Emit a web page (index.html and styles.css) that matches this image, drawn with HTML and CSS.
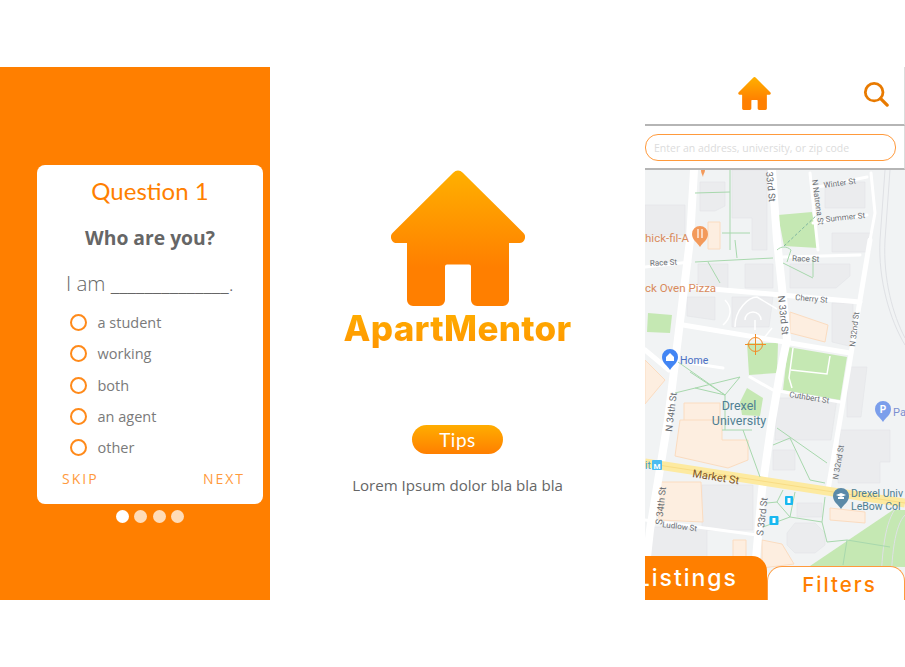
FILE: index.html
```html
<!DOCTYPE html>
<html lang="en">
<head>
    <meta charset="UTF-8">
    <meta name="viewport" content="width=device-width, initial-scale=1.0">
    <title>ApartMentor</title>
    <link rel="stylesheet" href="styles.css">
</head>
<body>

<div class="screens">

    <!-- question screen -->
    <div class="quiz">
        <div class="card">
            <h2 class="card-title">Question 1</h2>
            <h3 class="card-ask">Who are you?</h3>
            <p class="card-line">I am ______________.</p>
            <ul class="options">
                <li><span class="radio"></span><span>a student</span></li>
                <li><span class="radio"></span><span>working</span></li>
                <li><span class="radio"></span><span>both</span></li>
                <li><span class="radio"></span><span>an agent</span></li>
                <li><span class="radio"></span><span>other</span></li>
            </ul>
            <div class="card-nav">
                <span>SKIP</span>
                <span>NEXT</span>
            </div>
        </div>
        <div class="dots">
            <span class="dot dot-on"></span>
            <span class="dot"></span>
            <span class="dot"></span>
            <span class="dot"></span>
        </div>
    </div>

    <!-- splash screen -->
    <div class="splash">
        <svg class="logo" viewBox="391 170 134 136" aria-hidden="true">
            <defs>
                <linearGradient id="logoFill" x1="0" y1="0" x2="0" y2="1">
                    <stop offset="0" stop-color="#ffb000"/>
                    <stop offset="0.72" stop-color="#ff7f00"/>
                    <stop offset="1" stop-color="#ff7f00"/>
                </linearGradient>
            </defs>
            <path fill="url(#logoFill)" d="M453.5 172.5a6 6 0 0 1 9 0l60.500 60a6 6 0 0 1 -3.500 10.500h-10.500v57a6 6 0 0 1 -6 6h-26a6 6 0 0 1 -6 -6v-33.500a2 2 0 0 0 -2 -2h-22a2 2 0 0 0 -2 2v33.500a6 6 0 0 1 -6 6h-26a6 6 0 0 1 -6 -6v-57h-10a6 6 0 0 1 -4 -10.500z"/>
        </svg>
        <h1 class="brand">ApartMentor</h1>
        <a class="tips">Tips</a>
        <p class="lorem">Lorem Ipsum dolor bla bla bla</p>
    </div>

    <!-- map screen -->
    <div class="mapview">
        <div class="topbar">
            <svg class="home-icon" viewBox="391 170 134 136" aria-hidden="true">
                <defs>
                    <linearGradient id="homeFill" x1="0" y1="0" x2="0" y2="1">
                        <stop offset="0" stop-color="#ffb000"/>
                        <stop offset="0.72" stop-color="#ff7f00"/>
                    </linearGradient>
                </defs>
                <path fill="url(#homeFill)" d="M453.5 172.5a6 6 0 0 1 9 0l60.500 60a6 6 0 0 1 -3.500 10.500h-10.500v57a6 6 0 0 1 -6 6h-26a6 6 0 0 1 -6 -6v-33.500a2 2 0 0 0 -2 -2h-22a2 2 0 0 0 -2 2v33.500a6 6 0 0 1 -6 6h-26a6 6 0 0 1 -6 -6v-57h-10a6 6 0 0 1 -4 -10.500z"/>
            </svg>
            <svg class="search-icon" viewBox="0 0 28 28" aria-hidden="true">
                <circle cx="12" cy="12" r="9.500" fill="none" stroke="#e87a00" stroke-width="3"/>
                <path d="M19 19l7 7" fill="none" stroke="#e87a00" stroke-width="3.500" stroke-linecap="round"/>
            </svg>
        </div>
        <div class="searchbar">
            <input class="search-input" type="text" placeholder="Enter an address, university, or zip code">
        </div>
        <div class="map">
            <svg class="map-svg" viewBox="645 170 260 430" aria-hidden="true">
                <rect x="645" y="170" width="260" height="430" fill="#f1f3f4"/>

                <!-- buildings -->
                <g fill="#ebecee" stroke="#e2e4e7" stroke-width="0.600">
                    <path d="M732 170h35v80h-15v-32h-20z"/>
                    <path d="M645 205h40v30h-40z"/>
                    <path d="M700 182h25v24l-10 5h-15z"/>
                    <path d="M698 264h30v24h-30z"/>
                    <path d="M745 264h28v24h-28z"/>
                    <path d="M790 264h60v12l-14 12h-46z"/>
                    <path d="M687 297h28v23l-28 -4z"/>
                    <path d="M732 297h41l-4 30h-37z"/>
                    <path d="M832 303h21v44l-21 -5z"/>
                    <path d="M825 182h40v26h-40z"/>
                    <path d="M832 233h38v19h-38z"/>
                    <path d="M847 367h20l-6 50h-14z"/>
                    <path d="M777 398h60l-6 42h-56z"/>
                    <path d="M840 430h50v32h-10v21h-42z"/>
                    <path d="M702 485h51v45h-51z"/>
                    <path d="M648 527h59v30h-59z"/>
                    <path d="M795 523h20l10 10v12l-10 8h-20l-8 -8v-12z"/>
                    <path d="M773 450h22v20h-22z"/>
                    <path d="M797 503h25v14h-25z"/>
                </g>

                <!-- parks -->
                <g fill="#c5e8b3">
                    <path d="M778 215l34 -3 6 36 -34 -2z"/>
                    <path d="M747 343h31l-1 30 -28 2z"/>
                    <path d="M788 347l59 10 -7 43 -57 -10z"/>
                    <path d="M648 313l24 2 -2 18 -23 -1z"/>
                    <path d="M740 402l7 -14 16 10 -3 18 -18 -1z"/>
                    <path d="M810 566l83 -56h12v57z"/>
                </g>

                <!-- campus buildings -->
                <g fill="#fdeee0" stroke="#fbdcc0" stroke-width="1">
                    <path d="M708 222h12v27h-12z"/>
                    <path d="M790 312l38 13 -3 17 -35 -9z"/>
                    <path d="M645 360l20 20 -20 24z"/>
                    <path d="M684 403h36v27h-36z"/>
                    <path d="M680 420h42v20h26v20l-20 8 -53 -12z"/>
                    <path d="M657 482h44l2 40 -44 -2z"/>
                    <path d="M830 508l35 4v11l-35 -3z"/>
                    <path d="M762 540l20 4 12 20 -32 4z"/>
                    <path d="M733 540h13v18h-13z"/>
                </g>

                <!-- roads -->
                <g fill="none" stroke="#ffffff" stroke-linecap="round" stroke-linejoin="round">
                    <g stroke-width="3">
                        <path d="M645 267l45 -5"/>
                        <path d="M783 257l77 -2"/>
                        <path d="M813 188l54 -11"/>
                        <path d="M813 223l54 -8"/>
                        <path d="M645 520l112 15"/>
                        <path d="M750 377l23 13 67 12"/>
                        <path d="M690 363l33 5"/>
                        <path d="M810 173l8 77"/>
                        <path d="M871 173l4 40 -5 27"/>
                    </g>
                    <g stroke-width="5">
                        <path d="M690 287l170 15"/>
                        <path d="M683 325l167 28"/>
                        <path d="M870 240l-30 180 -12 70"/>
                        <path d="M645 350l24 20"/>
                    </g>
                    <g stroke-width="8">
                        <path d="M694 170l-4 70 -22 180 -18 110 -5 45"/>
                        <path d="M772 170l5 70 6 57 4 43 -7 33 -8 47 -10 70 -7 80"/>
                    </g>
                </g>
                <path d="M645 463l260 40" fill="none" stroke="#fdeaa0" stroke-width="9"/>
                <path d="M645 463l260 40" fill="none" stroke="#f8dc85" stroke-width="1"/>

                <!-- rail lines on the right -->
                <g fill="none" stroke="#dfe1e5" stroke-width="1">
                    <path d="M885 170l-5 70c-2 40 10 80 25 105"/>
                    <path d="M890 170l-5 70c-2 40 8 75 20 98"/>
                    <path d="M899 505c-12 10 -18 40 -18 90"/>
                    <path d="M905 515c-10 10 -14 40 -14 80"/>
                </g>

                <!-- footpaths -->
                <g fill="none" stroke="#a8d8ad" stroke-width="1">
                    <path d="M730 170v80M695 193l35 -1M722 233h28"/>
                    <path d="M695 262l78 -4M708 262l12 21M735 240l2 18M783 263l30 15M813 257v20M777 250c4 -4 10 -4 14 0l-4 12"/>
                    <path d="M678 362l47 33 15 -18M675 393l65 -16M690 372l35 23M725 395v35M695 388l30 7"/>
                    <path d="M722 430h30M743 430l17 47M777 428l50 35M790 438l20 42 15 3M773 445l17 -7"/>
                    <path d="M783 490l-6 12 -10 1M795 492l-5 25 32 5M777 502l13 15M825 497l-3 25 5 20 20 -2 43 7M790 517l-27 10M847 540l-4 25"/>
                </g>
                <path d="M784 246l34 -32" fill="none" stroke="#7fb6a0" stroke-width="1" stroke-dasharray="3 2"/>

                <!-- white campus walks -->
                <g fill="none" stroke="#ffffff" stroke-width="1.500">
                    <path d="M735 327c0 -18 14 -30 22 -30l20 12M745 320a8 8 0 0 1 16 0M755 320v10M725 300c8 8 6 18 -2 25M772 328l-8 10"/>
                    <path d="M793 348l-4 30 3 10M830 356l-3 18 -36 -4"/>
                </g>

                <!-- street names -->
                <g class="st">
                    <text x="766" y="172" transform="rotate(84 766 172)">33rd St</text>
                    <text x="812" y="180" class="st-sm" transform="rotate(82 812 180)">N Natrona St</text>
                    <text x="824" y="188" class="st-sm" transform="rotate(-8 824 188)">Winter St</text>
                    <text x="826" y="222" class="st-sm" transform="rotate(-6 826 222)">Summer St</text>
                    <text x="650" y="266" class="st-sm" transform="rotate(-3 650 266)">Race St</text>
                    <text x="792" y="261" class="st-sm" transform="rotate(2 792 261)">Race St</text>
                    <text x="795" y="300" class="st-sm" transform="rotate(5 795 300)">Cherry St</text>
                    <text x="778" y="296" transform="rotate(84 778 296)">N 33rd St</text>
                    <text x="855" y="347" class="st-sm" transform="rotate(-83 855 347)">N 32nd St</text>
                    <text x="789" y="397" class="st-sm" transform="rotate(9 789 397)">Cuthbert St</text>
                    <text x="672" y="432" transform="rotate(-83 672 432)">N 34th St</text>
                    <text x="662" y="525" transform="rotate(-84 662 525)">S 34th St</text>
                    <text x="662" y="527" class="st-sm" transform="rotate(7 662 527)">Ludlow St</text>
                    <text x="763" y="536" transform="rotate(-83 763 536)">S 33rd St</text>
                    <text x="838" y="480" class="st-sm" transform="rotate(-80 838 480)">N 32nd St</text>
                    <text x="692" y="477" class="st-market" transform="rotate(9 692 477)">Market St</text>
                </g>

                <!-- places -->
                <text x="645" y="242" class="poi-orange">hick-fil-A</text>
                <text x="645" y="292" class="poi-orange">ck Oven Pizza</text>
                <text x="680" y="364" class="poi-blue">Home</text>
                <text x="739" y="410" class="poi-uni" text-anchor="middle">Drexel</text>
                <text x="739" y="425" class="poi-uni" text-anchor="middle">University</text>
                <text x="851" y="497" class="poi-uni-sm">Drexel Univ</text>
                <text x="851" y="510" class="poi-uni-sm">LeBow Col</text>
                <text x="893" y="416" class="poi-park">Pa</text>
                <text x="645" y="469" class="poi-transit">it</text>

                <!-- pins -->
                <path d="M702 170h3c0 3 -2 4 -2 7 -1 -3 -2 -4 -2 -7z" fill="#f39a5b"/>
                <path d="M700 226a8 8 0 0 1 8 8c0 6 -5 8 -8 13 -3 -5 -8 -7 -8 -13a8 8 0 0 1 8 -8z" fill="#f39a5b"/>
                <path d="M698 229v9M702 229v9" stroke="#fff" stroke-width="1.200"/>
                <path d="M670 349a8 8 0 0 1 8 8c0 6 -5 8 -8 13 -3 -5 -8 -7 -8 -13a8 8 0 0 1 8 -8z" fill="#4285f4"/>
                <path d="M670 353l4 4v4h-8v-4z" fill="#fff"/>
                <path d="M883 401a8 8 0 0 1 8 8c0 6 -5 8 -8 13 -3 -5 -8 -7 -8 -13a8 8 0 0 1 8 -8z" fill="#7b9eeb"/>
                <text x="883" y="413" class="pin-p" text-anchor="middle">P</text>
                <path d="M841 488a8 8 0 0 1 8 8c0 6 -5 8 -8 13 -3 -5 -8 -7 -8 -13a8 8 0 0 1 8 -8z" fill="#5b8aa8"/>
                <path d="M836 495l5 -2 5 2 -5 2z M838 497h6v2h-6z" fill="#fff"/>

                <!-- transit -->
                <rect x="652" y="460" width="10" height="10" rx="1" fill="#4cbcf0"/>
                <text x="657" y="468.500" class="pin-m" text-anchor="middle">M</text>
                <rect x="785" y="496" width="8" height="9" rx="1" fill="#19b8f0"/>
                <rect x="769.500" y="516" width="9" height="9" rx="1" fill="#19b8f0"/>
                <path d="M787.500 498h3v5h-3zM772.500 518h3v5h-3z" fill="#fff"/>

                <!-- crosshair -->
                <g fill="none" stroke="#f28c28" stroke-width="1">
                    <circle cx="755.500" cy="344.500" r="7"/>
                    <path d="M745 344.500h21M755.500 334v21"/>
                </g>
            </svg>

            <div class="tabs">
                <div class="tab tab-listings">Listings</div>
                <div class="tab tab-filters">Filters</div>
            </div>
        </div>
    </div>

</div>

</body>
</html>
```

FILE: styles.css
```css
html { overflow: hidden; }

body {
    margin: 0;
    padding-top: 67px;
    background: #ffffff;
    font-family: "Open Sans", sans-serif;
    color: #666;
}

.screens {
    display: flex;
    height: 533px;
    width: 905px;
}

/* question screen */
.quiz {
    width: 270px;
    background: #ff7f00;
    padding-top: 98px;
    box-sizing: border-box;
}
.card {
    width: 226px;
    height: 339px;
    margin-left: 37px;
    background: #ffffff;
    border-radius: 8px;
    box-sizing: border-box;
    padding-top: 11px;
}
.card-title {
    margin: 0;
    text-align: center;
    font-family: Lato, sans-serif;
    font-size: 24px;
    line-height: 30px;
    font-weight: 400;
    color: #ff7f00;
}
.card-ask {
    margin: 19px 0 0;
    text-align: center;
    font-size: 19.300px;
    line-height: 26px;
    font-weight: 700;
    color: #666;
}
.card-line {
    margin: 19px 0 0;
    padding-left: 29px;
    font-size: 20.500px;
    line-height: 26px;
    font-weight: 300;
    color: #666;
    white-space: nowrap;
}
.options {
    list-style: none;
    margin: 11px 0 0;
    padding: 0 0 0 33px;
}
.options li {
    display: flex;
    align-items: center;
    gap: 10.500px;
    height: 31.250px;
    font-size: 14.500px;
    color: #7a7a7a;
}
.radio {
    width: 13px;
    height: 13px;
    border: 2px solid #ff8a1a;
    border-radius: 50%;
    flex: none;
}
.card-nav {
    display: flex;
    justify-content: space-between;
    padding: 0 18px 0 25px;
    margin-top: 6px;
    font-size: 14px;
    line-height: 20px;
    letter-spacing: 2px;
    color: #ff9a3c;
}
.dots {
    display: flex;
    justify-content: center;
    gap: 5.500px;
    width: 226px;
    margin: 6px 0 0 37px;
}
.dot {
    width: 13px;
    height: 13px;
    border-radius: 50%;
    background: #ffdcb8;
}
.dot-on { background: #ffffff; }

/* splash screen */
.splash {
    width: 375px;
    display: flex;
    flex-direction: column;
    align-items: center;
    padding-top: 103px;
    box-sizing: border-box;
}
.logo {
    width: 134px;
    height: 136px;
    display: block;
}
.brand {
    margin: 2px 0 0;
    font-family: Inter, sans-serif;
    font-size: 35px;
    line-height: 40px;
    font-weight: 800;
    letter-spacing: 0.300px;
    background: linear-gradient(180deg, #ffb000 0%, #ff9500 100%);
    -webkit-background-clip: text;
    background-clip: text;
    color: transparent;
}
.tips {
    margin-top: 77px;
    width: 91px;
    height: 29px;
    border-radius: 15px;
    background: linear-gradient(180deg, #ffad00 0%, #ff7f00 100%);
    color: #ffffff;
    font-family: Lato, sans-serif;
    font-size: 19px;
    line-height: 30px;
    letter-spacing: 0.500px;
    text-align: center;
}
.lorem {
    margin: 20px 0 0;
    font-size: 15.100px;
    line-height: 22px;
    color: #666;
}

/* map screen */
.mapview {
    width: 260px;
    display: flex;
    flex-direction: column;
}
.topbar {
    height: 59px;
    flex: none;
    position: relative;
    display: flex;
    align-items: center;
    justify-content: center;
    padding-right: 41px;
    box-sizing: border-box;
    border-right: 1px solid #dcdcdc;
    border-bottom: 2px solid #b5b5b5;
}
.home-icon {
    width: 33px;
    height: 33px;
    margin-bottom: 5px;
}
.search-icon {
    position: absolute;
    left: 218px;
    top: 14px;
    width: 26px;
    height: 26px;
}
.searchbar {
    height: 44px;
    flex: none;
    box-sizing: border-box;
    padding: 8px 8px 0 0;
    border-right: 1px solid #dcdcdc;
    border-bottom: 2px solid #b5b5b5;
}
.search-input {
    display: block;
    width: 251px;
    height: 27px;
    box-sizing: border-box;
    padding: 0 8px;
    border: 1px solid #ff9a3c;
    border-radius: 13px;
    background: #ffffff;
    font-family: "Open Sans", sans-serif;
    font-size: 10.500px;
    outline: none;
}
.search-input::placeholder { color: #dcdcdc; opacity: 1; }

.map {
    flex: 1;
    position: relative;
    overflow: hidden;
}
.map-svg {
    display: block;
    width: 260px;
    height: 430px;
}
.st text {
    font-family: Roboto, sans-serif;
    font-size: 9.500px;
    fill: #6a6e73;
}
.st .st-sm { font-size: 8px; }
.st .st-market { font-size: 11px; fill: #80552a; }
.poi-orange { font-family: Roboto, sans-serif; font-size: 11.500px; fill: #d98a5c; }
.poi-blue { font-family: Roboto, sans-serif; font-size: 10.500px; fill: #4a6fc4; }
.poi-uni { font-family: Roboto, sans-serif; font-size: 12.500px; fill: #4f7f92; }
.poi-uni-sm { font-family: Roboto, sans-serif; font-size: 10.500px; fill: #4f7f92; }
.poi-park { font-family: Roboto, sans-serif; font-size: 11px; fill: #7b8fd0; }
.poi-transit { font-family: Roboto, sans-serif; font-size: 10px; fill: #3f9fd0; }
.pin-p { font-family: Roboto, sans-serif; font-size: 10px; font-weight: 700; fill: #fff; }
.pin-m { font-family: Roboto, sans-serif; font-size: 8px; font-weight: 700; fill: #fff; }

.tabs {
    position: absolute;
    left: 0;
    right: 0;
    bottom: 0;
    display: flex;
    align-items: flex-end;
}
.tab {
    box-sizing: border-box;
    font-family: Inter, sans-serif;
    font-weight: 500;
    white-space: nowrap;
    overflow: hidden;
}
.tab-listings {
    width: 122px;
    height: 44px;
    background: #ff7f00;
    border-top-right-radius: 15px;
    color: #ffffff;
    font-size: 23px;
    line-height: 44px;
    letter-spacing: 2px;
    display: flex;
    justify-content: flex-end;
    padding-right: 29px;
}
.tab-filters {
    width: 138px;
    height: 34px;
    background: #ffffff;
    border: 1px solid #ff9a3c;
    border-bottom: none;
    border-radius: 15px 15px 0 0;
    color: #ff7f00;
    font-size: 20.500px;
    line-height: 36px;
    letter-spacing: 2px;
    text-align: center;
    padding-left: 7px;
}
```
